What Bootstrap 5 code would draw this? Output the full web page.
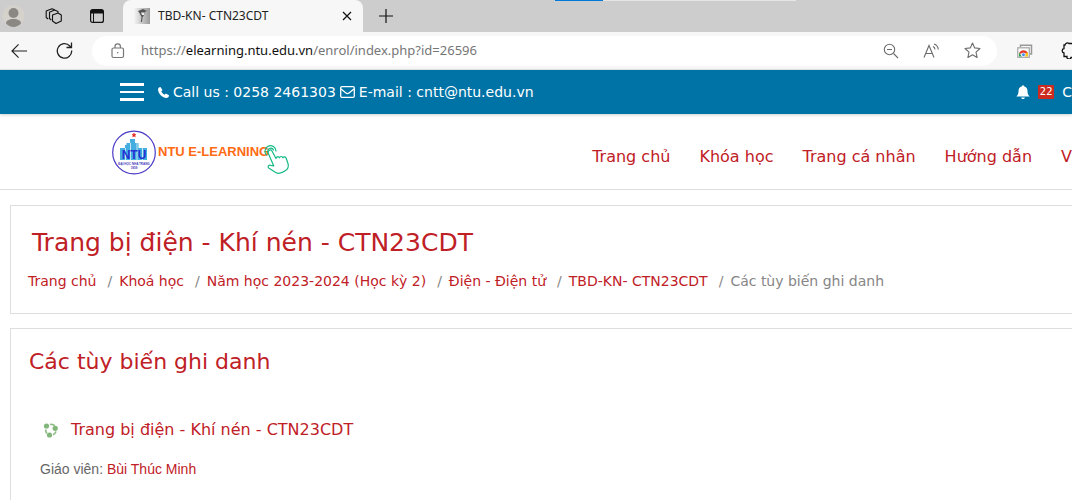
<!DOCTYPE html>
<html lang="vi">
<head>
<meta charset="utf-8">
<meta name="viewport" content="width=device-width, initial-scale=1">
<title>TBD-KN- CTN23CDT</title>
<link href="https://cdn.jsdelivr.net/npm/bootstrap@5.3.0/dist/css/bootstrap.min.css" rel="stylesheet">
<style>
  body { font-family: "DejaVu Sans", Verdana, sans-serif; overflow: hidden; background: #fff; color: #666; min-height: 100vh; }
  a { color: #bf2026; text-decoration: none; }
  svg { display: block; flex: none; }
  button { border: 0; background: none; padding: 0; color: #111; }
  .browser { font-family: "Noto Sans", "Segoe UI", sans-serif; background: #f7f7f7; color: #222; }
  .tabstrip { height: 32px; background: #cdcdcd; padding-left: 2px; }
  .tab-active { width: 240px; height: 32px; margin-left: 19px; padding: 0 11px; background: #f7f7f7; border-radius: 8px 8px 0 0; font-size: 12px; }
  .load-track { left: 555px; width: 241px; height: 1px; background: #e5e5e5; }
  .load-done { width: 48px; height: 1px; background: #0078d7; }
  .toolbar { height: 38px; padding-left: 11px; border-bottom: 1px solid #e8e8e8; }
  .address { height: 30px; margin: 0 20px 0 19px; padding: 0 16px 0 19px; border-radius: 15px; background: #fff; font-size: 13px; }
  .address a { color: #767676; margin-left: 16px; }
  .address b { color: #111; font-weight: 400; }
  .topbar { height: 44px; padding-left: 120px; background: #0073a6; color: #fff; font-size: 14px; box-shadow: 0 1px 3px #0003; }
  .topbar a { color: #fff; }
  .burger { width: 24px; height: 18px; margin-right: 14px; border-top: 3px solid #fff; border-bottom: 3px solid #fff; }
  .burger span { display: block; height: 2px; background: #fff; }
  .count { width: 16px; height: 14px; margin: 0 8px; padding: 0; border-radius: 1px; background: #cb2b20; font-size: 10px; line-height: 14px; font-weight: 400; }
  .mainbar { height: 76px; padding: 2px 0 0 112px; border-bottom: 1px solid #dedede; }
  .menu { gap: 29px; font-size: 16px; margin-top: 8px; }
  .panel { margin-left: 10px; border: 1px solid #dedede; border-right: 0; }
  .panel-head { margin-top: 15px; padding: 20px 17px 21px; }
  .panel-head h1 { font-size: 25px; line-height: 34px; margin: 0 0 11px 4px; color: #bf2026; }
  .crumbs { font-size: 14px; line-height: 21px; margin: 0; --bs-breadcrumb-item-padding-x: 11px; }
  .crumbs .breadcrumb-item + .breadcrumb-item::before { padding-right: 7px; color: #868686; }
  .crumbs .active { color: #868686; }
  .panel-body { margin-top: 14px; padding: 17px 18px 40px; min-height: 190px; }
  .panel-body h2 { font-size: 22px; line-height: 32px; margin: 0; color: #bf2026; }
  .course { margin: 40px 0 0 14px; gap: 12px; }
  .course h3 { font-size: 16px; line-height: 24px; margin: 0; }
  .teacher { font-family: "Liberation Sans", Arial, sans-serif; font-size: 14px; line-height: 20px; margin: 17px 0 0 11px; }
</style>
</head>
<body>
<header class="browser">
  <div class="tabstrip d-flex align-items-center position-relative">
    <svg width="23" height="24" viewBox="0 0 23 24"><circle cx="11.500" cy="12" r="11" fill="#d5d2cc"/><circle cx="11.500" cy="9" r="5" fill="#8b8884"/><path d="M4 19.500c0-3 3-4.500 7.500-4.500s7.500 1.500 7.500 4.500c-4 4.500-11 4.500-15 0Z" fill="#8b8884"/></svg>
    <button type="button" class="ms-3 ps-1" aria-label="Workspaces"><svg width="17" height="17" viewBox="0 0 17 17" fill="none" stroke="#111" stroke-width="1.100" stroke-linejoin="round"><path d="m7.500 7 5.500-2 3.300 2v6L11 15.500 7.500 13Z M13 5V3.500L9.500 2 4.500 4.200v6.300l1.800 1.500 M10 2 7 .7 1.200 3v6.500l2 1.500"/></svg></button>
    <button type="button" class="ms-4 ps-1" aria-label="Vertical tabs"><svg width="14" height="14" viewBox="0 0 14 14"><rect x=".6" y=".6" width="12.800" height="12.800" rx="2" fill="none" stroke="#111" stroke-width="1.200"/><path d="M1 1h12v3.500H1z" fill="#111"/><path d="M3.500 4v9" stroke="#111"/></svg></button>
    <div class="tab-active d-flex align-items-center">
      <svg width="16" height="16" viewBox="0 0 16 16"><defs><linearGradient id="fav"><stop stop-color="#f5f5f5"/><stop offset="1" stop-color="#999"/></linearGradient></defs><path fill="url(#fav)" d="M0 0h16v16H0z"/><path d="m4 3 5-2 4 2-2.500 1L10 7 8.500 9.500 8 14H6.800l.7-5L5.500 5Z" fill="#555"/><path d="M7 4.500h3V7H8z" fill="#eee"/></svg>
      <span class="ms-2 text-nowrap">TBD-KN- CTN23CDT</span>
      <button type="button" class="ms-auto" aria-label="Close tab"><svg width="10" height="10" viewBox="0 0 10 10" stroke="#111" stroke-width="1.200"><path d="m1 1 8 8M9 1 1 9"/></svg></button>
    </div>
    <button type="button" class="ms-3" aria-label="New tab"><svg width="14" height="14" viewBox="0 0 14 14" stroke="#111" stroke-width="1.200"><path d="M7 0v14M0 7h14"/></svg></button>
    <div class="load-track position-absolute top-0"><div class="load-done"></div></div>
  </div>
  <div class="toolbar d-flex align-items-center">
    <button type="button" aria-label="Back"><svg width="17" height="16" viewBox="0 0 18 16" fill="none" stroke="#222" stroke-width="1.200"><path d="M17 8H1.500M8 1 1 8l7 7"/></svg></button>
    <button type="button" class="ms-4 ps-1" aria-label="Refresh"><svg width="17" height="17" viewBox="0 0 16 17" fill="none" stroke="#222" stroke-width="1.300"><path d="M15.200 8.500A7.200 7.200 0 1 1 13.300 4L15 5.500M15 .5v5h-5"/></svg></button>
    <div class="address d-flex align-items-center flex-grow-1">
      <svg width="14" height="16" viewBox="0 0 14 16" fill="none" stroke="#777" stroke-width="1.200"><rect x="1" y="5" width="11.500" height="9.500" rx="1.500"/><path d="M4 5V3.500a2.700 2.700 0 0 1 5.400 0V5"/><circle cx="6.700" cy="9.700" r=".8" fill="#777" stroke="none"/></svg>
      <a href="https://elearning.ntu.edu.vn/enrol/index.php?id=26596">https://<b>elearning.ntu.edu.vn</b>/enrol/index.php?id=26596</a>
      <button type="button" class="ms-auto" aria-label="Zoom out"><svg width="16" height="16" viewBox="0 0 16 16" fill="none" stroke="#6b6b6b" stroke-width="1.100"><circle cx="6.500" cy="6.500" r="5.200"/><path d="M4 6.500h5M10.500 10.500l4.500 4.500"/></svg></button>
      <button type="button" class="ms-4" aria-label="Read aloud"><svg width="17" height="16" viewBox="0 0 17 16" fill="none" stroke="#6b6b6b" stroke-width="1.100"><path d="m1 14.500 5-12 5 12M3 10.500h6.500M10 3.500c1.300.6 1.900 1.600 2 3M11 1c2.500.8 4 2.800 4.300 5.500"/></svg></button>
      <button type="button" class="ms-4" aria-label="Favourite"><svg width="17" height="17" viewBox="0 0 17 17" fill="none" stroke="#6b6b6b" stroke-width="1.100" stroke-linejoin="round"><path d="m8.500 1 2.200 4.900 5.300.6-4 3.600 1.100 5.400-4.600-2.700-4.600 2.700L5 10.100 1 6.500l5.300-.6Z"/></svg></button>
    </div>
    <button type="button" aria-label="Extension"><svg width="16" height="14" viewBox="0 0 16 14"><path d="M3.500 3V1.200h11V10H13" fill="none" stroke="#999" stroke-width="1.500"/><rect x=".8" y="3.800" width="11.500" height="9.500" fill="#fff" stroke="#aaa" stroke-width="1.300"/><path d="M2 10a4.600 4.600 0 0 1 9 0l-4.500-1Z" fill="#e33b2e"/><path d="m2 8.500 3 4H2Z" fill="#2ca24c"/><path d="M11 8.500v4H7l2-3.500Z" fill="#fbc116"/><circle cx="6.500" cy="10.800" r="1.800" fill="#4285f4" stroke="#fff" stroke-width=".6"/></svg></button>
    <button type="button" class="ms-4 ps-1" aria-label="Extensions"><svg width="11" height="17" viewBox="0 0 11 17" fill="none" stroke="#111" stroke-width="1.300"><path d="M11 1.500H8A2.500 2.500 0 0 0 4 3H3v3.500a2.300 2.300 0 0 0 0 4.500v3.500h3a2 2 0 0 0 4 1h1"/></svg></button>
  </div>
</header>

<div class="topbar d-flex align-items-center text-nowrap">
  <button type="button" class="burger d-flex flex-column justify-content-center align-items-stretch" aria-label="Menu"><span></span></button>
  <svg width="11" height="11" viewBox="0 0 11 11" fill="#fff"><path d="M2.500 0 4.500 3.200 3.300 4.300c.6 1.500 1.800 2.700 3.300 3.400L7.800 6.500 11 8.300c0 1.700-1.200 2.700-2.700 2.700C4 10.500.5 7 0 2.800 0 1.200 1 .2 2.500 0Z"/></svg>
  <span class="ms-1">Call us : 0258 2461303</span>
  <svg class="ms-1" width="15" height="12" viewBox="0 0 15 12" fill="none" stroke="#fff" stroke-width="1.300"><rect x=".7" y=".7" width="13.600" height="10.600" rx="1.200"/><path d="m1 3 5 4c1 .8 2 .8 3 0l5-4"/></svg>
  <span class="ms-1">E-mail : <a href="mailto:cntt@ntu.edu.vn">cntt@ntu.edu.vn</a></span>
  <a href="#" class="ms-auto" aria-label="Notifications"><svg width="14" height="15" viewBox="0 0 14 15" fill="#fff"><path d="M6 1.300a1 1 0 0 1 2 0c2.500.5 3.500 2.500 3.500 5 0 2.700.8 4 2.200 5.200H.3C1.700 10.300 2.500 9 2.500 6.300c0-2.500 1-4.500 3.500-5ZM5.200 12.500h3.600c-.2 2-3.400 2-3.600 0Z"/></svg></a>
  <span class="badge count">22</span>
  <a href="#">C</a>
</div>

<nav class="mainbar d-flex align-items-center text-nowrap">
  <a href="#" aria-label="NTU E-Learning">
    <svg width="180" height="46" viewBox="0 0 180 46">
      <circle cx="22" cy="22.500" r="21.300" fill="#fff" stroke="#4b3bc6" stroke-width="1.200"/>
      <path d="M8 18h5v-3h1.500v-2H18V9h5v4h3.500v5H35v12H8Z" fill="#45aee0"/><path d="M13.500 18v12M18.500 13v17M25 13v17M30.500 18v12" stroke="#fff" stroke-width=".7"/>
      <path d="m22 3 .6 1.400H24l-1.100 1 .4 1.500-1.300-.9-1.300.9.400-1.500-1.100-1h1.400Z" fill="#e2231a" stroke="#e2231a" stroke-width=".5"/>
      <text x="22" y="29" text-anchor="middle" font-family="Liberation Sans, sans-serif" font-size="12" font-weight="700" fill="#2531d4">NTU</text>
      <text x="22" y="35" text-anchor="middle" font-family="Liberation Sans, sans-serif" font-size="3" font-weight="700" fill="#4437bb">ĐẠI HỌC NHA TRANG</text>
      <text x="22" y="39" text-anchor="middle" font-family="Liberation Sans, sans-serif" font-size="3" font-weight="700" fill="#4437bb">1959</text>
      <text x="46" y="26" font-family="Liberation Sans, sans-serif" font-size="13" font-weight="700" fill="#ff6a13">NTU E-LEARNING</text>
      <g fill="none" stroke="#15ba86" stroke-width="1.200" stroke-linejoin="round" stroke-linecap="round"><path d="M154.500 25a5.500 5.500 0 1 1 9.500-4M156 22.500a3 3 0 1 1 5.500-2.500"/><path d="m160 21 4 7.500c.5-2.500 2.800-2.300 3.500-.7.700-1.800 2.800-1.600 3.400 0 1-1.500 2.800-1 3.300.5l2 6c.6 3-.6 5-3 6.500-3 2.200-6.500 3.500-9.500 1.700l-7-4.500c-1.500-1.700 0-3.300 2-2.700l3 .5-5.500-12.500c-.3-2.600 2.200-4.600 3.800-2.300Z" fill="#fff"/></g>
    </svg>
  </a>
  <div class="menu d-flex ms-auto">
    <a href="#">Trang chủ</a>
    <a href="#">Khóa học</a>
    <a href="#">Trang cá nhân</a>
    <a href="#">Hướng dẫn</a>
    <a href="#">V</a>
  </div>
</nav>

<main>
  <section class="panel panel-head">
    <h1>Trang bị điện - Khí nén - CTN23CDT</h1>
    <nav aria-label="breadcrumb">
      <ol class="breadcrumb crumbs">
        <li class="breadcrumb-item"><a href="#">Trang chủ</a></li>
        <li class="breadcrumb-item"><a href="#">Khoá học</a></li>
        <li class="breadcrumb-item"><a href="#">Năm học 2023-2024 (Học kỳ 2)</a></li>
        <li class="breadcrumb-item"><a href="#">Điện - Điện tử</a></li>
        <li class="breadcrumb-item"><a href="#">TBD-KN- CTN23CDT</a></li>
        <li class="breadcrumb-item active" aria-current="page">Các tùy biến ghi danh</li>
      </ol>
    </nav>
  </section>
  <section class="panel panel-body">
    <h2>Các tùy biến ghi danh</h2>
    <div class="course d-flex align-items-center">
      <svg width="16" height="16" viewBox="0 0 16 16"><path d="M7 2.500c2-.5 3.500 0 4.800 1.200M13 9.500c-.6 1.600-1.600 2.700-3 3.300M2.800 7.500c-.2 1.500.2 2.800 1 4" fill="none" stroke="#8fbd86" stroke-width="1.700"/><g fill="#82b57a"><circle cx="3.500" cy="4" r="2.600"/><circle cx="12.200" cy="6.300" r="2.600"/><circle cx="6.500" cy="13" r="2.600"/></g></svg>
      <h3><a href="#">Trang bị điện - Khí nén - CTN23CDT</a></h3>
    </div>
    <p class="teacher">Giáo viên: <a href="#">Bùi Thúc Minh</a></p>
  </section>
</main>
<script src="https://cdn.jsdelivr.net/npm/bootstrap@5.3.0/dist/js/bootstrap.bundle.min.js"></script>
</body>
</html>
